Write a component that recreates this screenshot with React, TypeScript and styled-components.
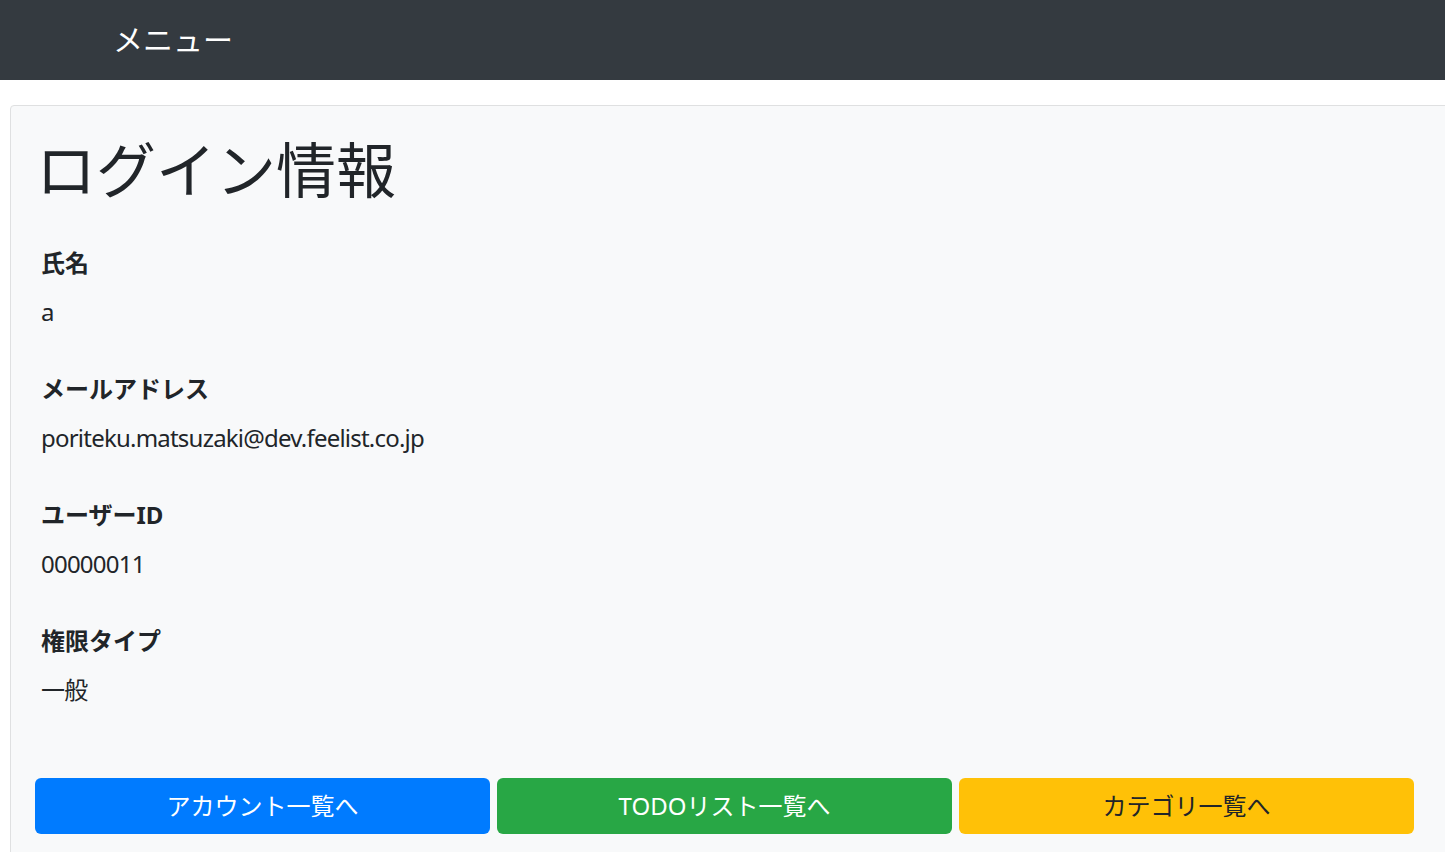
import React from "react";
import styled, { createGlobalStyle } from "styled-components";

const Global = createGlobalStyle`
  html, body { margin: 0; padding: 0; background: #ffffff; overflow: hidden; }
  body {
    font-family: "Noto Sans", "Noto Sans CJK JP", sans-serif;
    color: #212529;
    font-size: 24px;
  }
  * { box-sizing: border-box; }
`;

const NavBar = styled.header`
  height: 80px;
  background: #343a40;
  display: flex;
  align-items: center;
  padding: 0 0 4px 113px;
`;

const Brand = styled.span`
  color: #ffffff;
  font-size: 30px;
  line-height: 1;
  font-family: "Noto Sans CJK JP", sans-serif;
`;

const Page = styled.main`
  padding: 25px 0 0 10px;
`;

const Card = styled.section`
  width: 1441px;
  background: #f8f9fa;
  border: 1px solid #dfe0e1;
  border-radius: 4px;
  padding: 25px 30px 40px 30px;
`;

const Title = styled.h1`
  margin: 0 0 42px -5px;
  font-size: 60px;
  font-weight: 400;
  line-height: 72px;
  font-family: "Noto Sans CJK JP", sans-serif;
`;

const Field = styled.div`
  margin-bottom: 41px;
`;

const Label = styled.div`
  font-weight: 700;
  line-height: 36px;
  margin-bottom: 13px;
`;

const Value = styled.div`
  line-height: 36px;
  letter-spacing: -0.78px;
`;

const ButtonRow = styled.div`
  display: grid;
  grid-template-columns: repeat(3, 455px);
  gap: 7px;
  margin: 70px 0 0 -6px;
`;

const Button = styled.button<{ $bg: string; $fg: string }>`
  height: 56px;
  border: none;
  border-radius: 6px;
  background: ${(p) => p.$bg};
  color: ${(p) => p.$fg};
  font-family: "Noto Sans", "Noto Sans CJK JP", sans-serif;
  font-size: 24px;
  line-height: 36px;
  cursor: pointer;
`;

const fields = [
  { label: "氏名", value: "a" },
  { label: "メールアドレス", value: "poriteku.matsuzaki@dev.feelist.co.jp" },
  { label: "ユーザーID", value: "00000011" },
  { label: "権限タイプ", value: "一般" },
];

export default function App() {
  return (
    <>
      <Global />
      <NavBar>
        <Brand>メニュー</Brand>
      </NavBar>
      <Page>
        <Card>
          <Title>ログイン情報</Title>
          {fields.map((f) => (
            <Field key={f.label}>
              <Label>{f.label}</Label>
              <Value>{f.value}</Value>
            </Field>
          ))}
          <ButtonRow>
            <Button $bg="#007bff" $fg="#ffffff">アカウント一覧へ</Button>
            <Button $bg="#28a745" $fg="#ffffff">TODOリスト一覧へ</Button>
            <Button $bg="#ffc107" $fg="#212529">カテゴリ一覧へ</Button>
          </ButtonRow>
        </Card>
      </Page>
    </>
  );
}
